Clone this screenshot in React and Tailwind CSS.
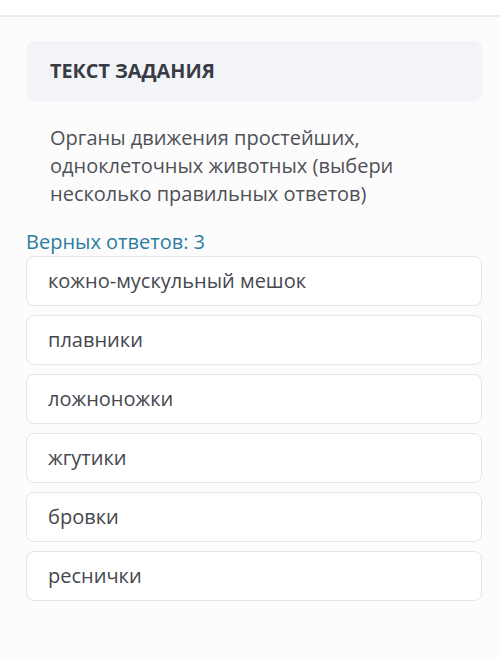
export default function App() {
  const options = [
    "кожно-мускульный мешок",
    "плавники",
    "ложноножки",
    "жгутики",
    "бровки",
    "реснички",
  ];

  return (
    <div
      className="w-[500px] h-[659px] bg-[#fcfcfd] overflow-hidden"
      style={{ fontFamily: '"Open Sans", "Noto Sans", sans-serif' }}
    >
      <div className="h-[17px] border-b-2 border-[#ececee] bg-white" />
      <div className="pl-[26px] pr-[18px] pt-[24px]">
        <div className="h-[60px] rounded-lg bg-[#f3f4f8] flex items-center px-[24px]">
          <div className="text-[19.8px] font-bold text-[#383b43]">
            ТЕКСТ ЗАДАНИЯ
          </div>
        </div>
        <div className="pl-[24px] pt-[23px] text-[20px] leading-[28px] text-[#4e5157]">
          Органы движения простейших,
          <br />
          одноклеточных животных (выбери
          <br />
          несколько правильных ответов)
        </div>
        <div className="mt-[21px] mb-[1px] text-[20px] leading-[26px] text-[#2c7ca0]">
          Верных ответов: 3
        </div>
        <div className="flex flex-col gap-[9px]">
          {options.map((o) => (
            <div
              key={o}
              className="h-[50px] rounded-lg border border-[#e3e4e6] bg-white flex items-center px-[21px] text-[20px] text-[#45484e]"
            >
              {o}
            </div>
          ))}
        </div>
      </div>
    </div>
  );
}
